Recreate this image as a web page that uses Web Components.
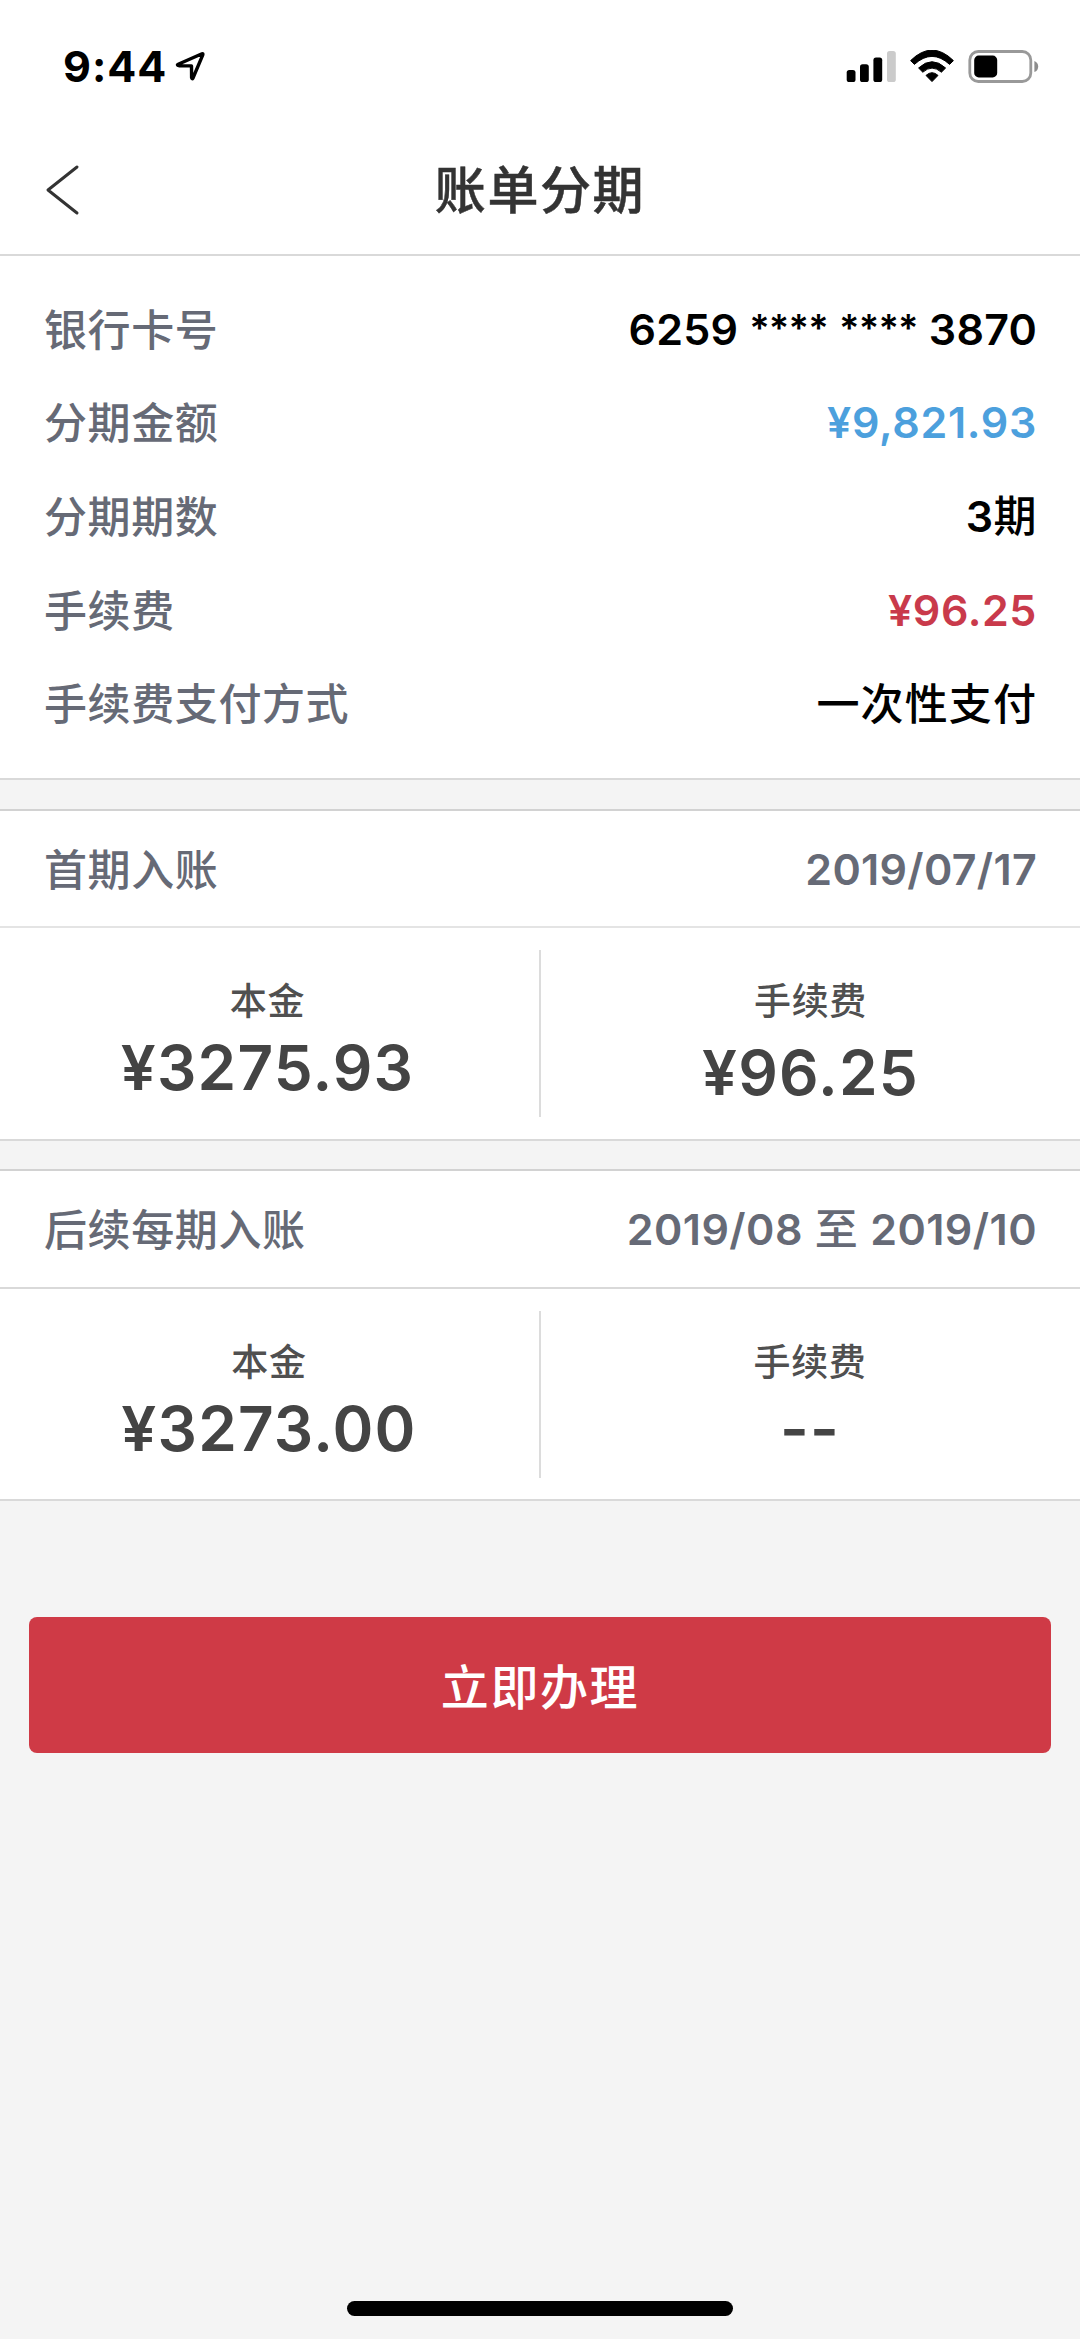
<!DOCTYPE html>
<html lang="zh-CN">
<head>
<meta charset="utf-8">
<title>账单分期</title>
<style>
html, body { margin: 0; background: #f4f4f4; }
body { font-family: Inter, "Noto Sans CJK SC", sans-serif; font-weight: 500; }
</style>
</head>
<body>
<installment-page></installment-page>
<script>
const define = (name, html) => {
  const tpl = document.createElement('template');
  tpl.innerHTML = html;
  customElements.define(name, class extends HTMLElement {
    constructor() {
      super();
      this.attachShadow({ mode: 'open' }).append(tpl.content.cloneNode(true));
    }
  });
};

define('status-bar', `
<style>
  :host { display: flex; justify-content: space-between; align-items: center; height: 132px; padding: 0 41px 0 63px; color: #000; }
  .left { display: flex; align-items: center; }
  .time { font-size: 43px; font-weight: 700; letter-spacing: 1px; line-height: 60px; }
  svg { display: block; }
  .loc { margin-left: 8px; }
</style>
<div class="left">
  <span class="time">9:44</span>
  <svg class="loc" width="32" height="34" viewBox="0 0 32 34"><path d="M3.2 15.2 L27 4.8 Q28.3 4.4 27.8 5.8 L18 29 Q17 30.6 16.6 28.6 L16.5 16.9 L4 16.7 Q1.4 16 3.2 15.2Z" fill="none" stroke="#000" stroke-width="3.4" stroke-linejoin="round"/></svg>
</div>
<svg width="193" height="33" viewBox="0 0 193 33">
  <rect x="0.7" y="20" width="8.8" height="12" rx="2.6"/>
  <rect x="14" y="14.2" width="8.8" height="17.8" rx="2.6"/>
  <rect x="27.4" y="7.6" width="8.8" height="24.4" rx="2.6"/>
  <rect x="41" y="1" width="8.8" height="31" rx="2.6" fill="#cbcbcb"/>
  <path d="M64.6 10.6 Q86 -10.4 107.4 10.6 L103.6 14.4 Q86 -1.6 68.4 14.4Z" stroke="#000" stroke-linejoin="round"/>
  <path d="M72.6 18 Q86 5.4 99.6 18 L95.4 22.2 Q86 14 76.8 22.2Z" stroke="#000" stroke-linejoin="round"/>
  <path d="M80 25.4 Q86 20 92 25.4 L86 31.6Z" stroke="#000" stroke-linejoin="round"/>
  <rect x="123.8" y="1.5" width="61" height="30" rx="8.5" fill="none" stroke="#999" stroke-width="2.8"/>
  <rect x="128.2" y="5.6" width="23" height="21.8" rx="4.5"/>
  <path d="M188.4 11 Q192.2 12.6 192.2 16.4 Q192.2 20.4 188.4 22Z" fill="#8c8c8c"/>
</svg>`);

define('nav-bar', `
<style>
  :host { display: grid; grid-template-columns: 120px 1fr 120px; align-items: center; height: 122px; border-bottom: 2px solid #d9d9d9; color: #333; }
  .back { padding-left: 45px; margin-bottom: 7px; }
  svg { display: block; }
  h1 { margin: 0 0 5px; font-size: 51px; line-height: 60px; font-weight: 500; letter-spacing: 1.6px; text-align: center; -webkit-text-stroke: .5px #333; }
</style>
<div class="back"><svg width="36" height="52" viewBox="0 0 36 52"><path d="M32 3 L3 26 L32 49" fill="none" stroke="#333" stroke-width="3" stroke-linecap="round" stroke-linejoin="round"/></svg></div>
<h1><slot></slot></h1>`);

define('detail-row', `
<style>
  :host { display: flex; justify-content: space-between; align-items: center; height: var(--row-height, 93.6px); padding: 0 43px 0 44px; font-size: 43px; line-height: 60px; color: #666a76; }
  .label { letter-spacing: .6px; padding-top: 2px; }
  .value { color: var(--value-color, #000); letter-spacing: var(--value-spacing, .5px); font-weight: 500; }
  .value ::slotted(*) { white-space: pre; }
</style>
<span class="label"><slot name="label"></slot></span>
<span class="value"><slot></slot></span>`);

define('info-card', `
<style>
  :host { display: block; box-sizing: border-box; background: #fff; border-bottom: 2px solid #d9d9d9; }
</style>
<slot></slot>`);

define('amount-cell', `
<style>
  :host { display: flex; flex-direction: column; align-items: center; color: #444; }
  .name { font-size: 37px; line-height: 50px; letter-spacing: .7px; color: #505050; }
  .sum { font-size: 62px; line-height: 70px; font-weight: 600; letter-spacing: 1.2px; margin-top: var(--sum-gap, 5.5px); }
</style>
<span class="name"><slot name="label"></slot></span>
<span class="sum"><slot></slot></span>`);

define('amount-pair', `
<style>
  :host { display: grid; grid-template-columns: 539px 2px 539px; align-items: start; height: 211px; }
  i { background: #dcdcdc; height: 167px; margin-top: 22px; }
  ::slotted(amount-cell) { margin-top: 49px; }
</style>
<slot name="left"></slot><i></i><slot name="right"></slot>`);

define('primary-button', `
<style>
  :host { display: block; }
  button { display: block; width: 100%; height: 136px; border: 0; border-radius: 8px; padding: 5px 0 0; background: #cf3a46; color: #fff; font: 500 48px/60px Inter, "Noto Sans CJK SC", sans-serif; letter-spacing: 1.6px; }
</style>
<button><slot></slot></button>`);

define('installment-page', `
<style>
  :host { display: flex; flex-direction: column; box-sizing: border-box; height: 2339px; background: #f4f4f4; }
  header { background: #fff; }
  .summary { padding: 26px 0 0; height: 524px; }
  .period { border-top: 2px solid #d2d2d2; margin-top: 29px; }
  .period.next { margin-top: 28px; }
  .head { --row-height: 115px; --value-color: #666a76; --value-spacing: .3px; border-bottom: 2px solid #e4e4e4; }
  .next .head { border-color: #d9d9d9; padding-bottom: 1px; --value-spacing: .45px; }
  .next amount-pair { height: 210px; }
  b { font-weight: 600; }
  .stars { font-size: 38px; letter-spacing: -.8px; vertical-align: 3px; line-height: 1; }
  .card { --value-spacing: .2px; }
  .method { --value-spacing: 1.1px; }
  .method > :last-child { display: block; padding-top: 2px; }
  .blue { --value-color: #4ca0dd; --value-spacing: .7px; }
  .red { --value-color: #c93a4b; --value-spacing: .6px; }
  primary-button { margin: 116px 29px 0; }
  footer { margin-top: auto; display: flex; justify-content: center; padding-bottom: 23px; }
  footer i { width: 386px; height: 15px; border-radius: 8px; background: #000; }
</style>
<header>
  <status-bar></status-bar>
  <nav-bar>账单分期</nav-bar>
</header>
<info-card class="summary">
  <detail-row class="card"><span slot="label">银行卡号</span><b>6259 <span class="stars">****</span> <span class="stars">****</span> 3870</b></detail-row>
  <detail-row class="blue"><span slot="label">分期金额</span><b>¥9,821.93</b></detail-row>
  <detail-row><span slot="label">分期期数</span><span><b>3</b>期</span></detail-row>
  <detail-row class="red"><span slot="label">手续费</span><b>¥96.25</b></detail-row>
  <detail-row class="method"><span slot="label">手续费支付方式</span><span>一次性支付</span></detail-row>
</info-card>
<info-card class="period">
  <detail-row class="head"><span slot="label">首期入账</span><b>2019/07/17</b></detail-row>
  <amount-pair>
    <amount-cell slot="left" style="padding-right:4px"><span slot="label">本金</span>¥3275.93</amount-cell>
    <amount-cell slot="right" style="--sum-gap:10.5px"><span slot="label">手续费</span>¥96.25</amount-cell>
  </amount-pair>
</info-card>
<info-card class="period next">
  <detail-row class="head"><span slot="label">后续每期入账</span><span><b>2019/08</b> 至 <b>2019/10</b></span></detail-row>
  <amount-pair>
    <amount-cell slot="left" style="padding-right:1px"><span slot="label">本金</span>¥3273.00</amount-cell>
    <amount-cell slot="right" style="padding-right:1px"><span slot="label">手续费</span>--</amount-cell>
  </amount-pair>
</info-card>
<primary-button>立即办理</primary-button>
<footer><i></i></footer>`);
</script>
</body>
</html>
